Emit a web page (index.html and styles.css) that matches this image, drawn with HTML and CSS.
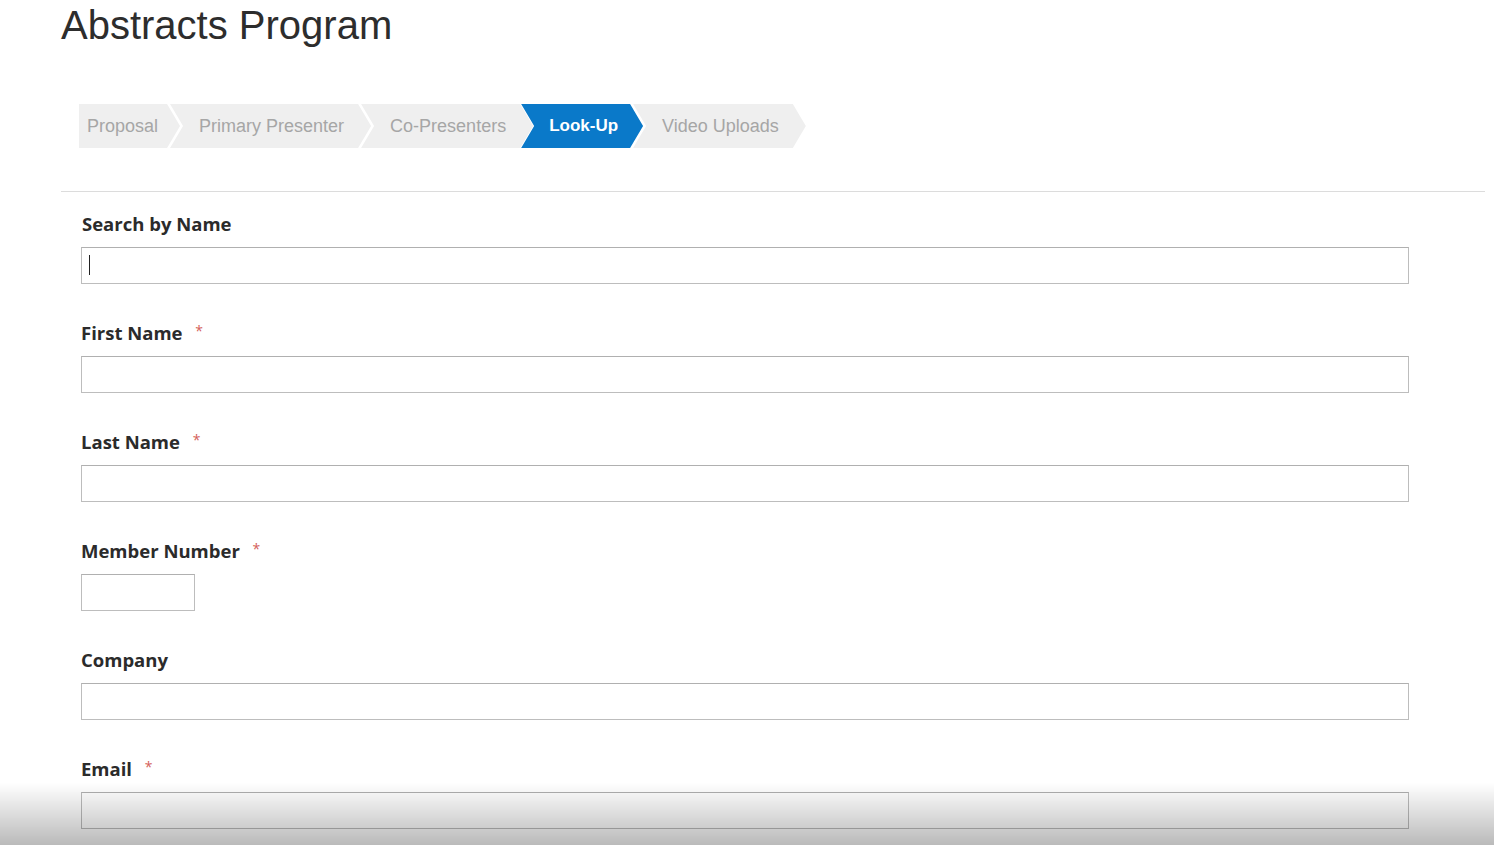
FILE: index.html
```html
<!DOCTYPE html>
<html lang="en">
<head>
    <meta charset="UTF-8">
    <meta name="viewport" content="width=device-width, initial-scale=1.0">
    <title>Abstracts Program</title>
    <link rel="stylesheet" href="styles.css">
</head>
<body>
    <div class="page">
        <h1>Abstracts Program</h1>

        <!-- Wizard steps -->
        <div class="steps">
            <a class="step first" href="#proposal">Proposal</a>
            <a class="step" href="#primary">Primary Presenter</a>
            <a class="step" href="#co">Co-Presenters</a>
            <a class="step active" href="#lookup">Look-Up</a>
            <a class="step" href="#video">Video Uploads</a>
        </div>

        <hr class="divider">

        <form class="lookup-form">
            <div class="field">
                <label for="search" class="search-label">Search by Name</label>
                <div class="input-wrap">
                    <input type="text" id="search" name="search">
                    <span class="caret"></span>
                </div>
            </div>
            <div class="field">
                <label for="firstName">First Name <span class="req">*</span></label>
                <input type="text" id="firstName" name="firstName">
            </div>
            <div class="field">
                <label for="lastName">Last Name <span class="req">*</span></label>
                <input type="text" id="lastName" name="lastName">
            </div>
            <div class="field">
                <label for="member">Member Number <span class="req">*</span></label>
                <input type="text" id="member" name="member" class="short">
            </div>
            <div class="field">
                <label for="company">Company</label>
                <input type="text" id="company" name="company">
            </div>
            <div class="field">
                <label for="email">Email <span class="req">*</span></label>
                <input type="text" id="email" name="email">
            </div>
        </form>
    </div>

    <!-- video player shade at the bottom -->
    <div class="shade"></div>
</body>
</html>
```

FILE: styles.css
```css
body {
    font-family: "Liberation Sans", Arial, sans-serif;
    margin: 0;
    padding: 0;
    background-color: #fff;
    color: #333;
    overflow: hidden;
}
.page {
    width: 1424px;
    margin-left: 61px;
}
h1 {
    font-weight: normal;
    font-size: 40px;
    line-height: 48px;
    margin: 0;
    padding-top: 1px;
    color: #2d2d2d;
}
/* Wizard steps */
.steps {
    display: flex;
    margin: 55px 0 0 18px;
    height: 44px;
}
.step {
    display: flex;
    align-items: center;
    height: 44px;
    padding: 0 27px 0 29px;
    margin-left: -10px;
    background-color: #efefef;
    color: #a6a6a6;
    font-size: 18px;
    text-decoration: none;
    clip-path: polygon(0 0, calc(100% - 13px) 0, 100% 50%, calc(100% - 13px) 100%, 0 100%, 13px 50%);
}
.step.first {
    margin-left: 0;
    padding-left: 8px;
    padding-right: 22px;
    clip-path: polygon(0 0, calc(100% - 13px) 0, 100% 50%, calc(100% - 13px) 100%, 0 100%);
}
.step.active {
    background-color: #0a79c9;
    color: #fff;
    font-weight: bold;
    font-size: 17px;
    margin-left: -12px;
    padding-left: 28px;
    padding-right: 25px;
}
.divider {
    border: none;
    border-top: 1px solid #dcdcdc;
    margin: 43px 0 0 0;
}
/* Form */
.lookup-form {
    padding: 21px 0 0 20px;
}
.field {
    margin-bottom: 38px;
}
label {
    display: block;
    font-family: "Open Sans", sans-serif;
    font-weight: bold;
    font-size: 18.5px;
    line-height: 22px;
    height: 22px;
    color: #2b2b2b;
    margin-bottom: 12px;
}
.search-label {
    padding-left: 1px;
}
.req {
    position: relative;
    top: -4px;
    color: #d4605a;
    font-size: 14px;
    font-weight: normal;
    margin-left: 8px;
}
input[type="text"] {
    display: block;
    width: 1328px;
    height: 37px;
    padding: 0 8px;
    border: 1px solid #bdbdbd;
    border-top-color: #b0b0b0;
    box-sizing: border-box;
    background-color: #fff;
    font-size: 15px;
    outline: none;
}
input.short {
    width: 114px;
}
.input-wrap {
    position: relative;
}
.caret {
    position: absolute;
    left: 8px;
    top: 8px;
    width: 1px;
    height: 20px;
    background-color: #222;
}
.shade {
    position: fixed;
    left: 0;
    right: 0;
    bottom: 0;
    height: 62px;
    background: linear-gradient(rgba(0, 0, 0, 0), rgba(0, 0, 0, 0.27));
    pointer-events: none;
}
```
